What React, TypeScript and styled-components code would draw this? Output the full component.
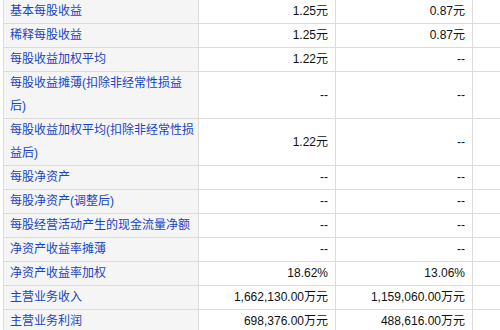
import styled, { createGlobalStyle } from "styled-components";

const GlobalStyle = createGlobalStyle`
    html, body {
        margin: 0;
        padding: 0;
        background: #ffffff;
        overflow: hidden;
    }
`;

type Row = {
    name: string;
    cur: string;
    prev: string;
    tall?: boolean;
};

const rows: Row[] = [
    { name: "基本每股收益", cur: "1.25元", prev: "0.87元" },
    { name: "稀释每股收益", cur: "1.25元", prev: "0.87元" },
    { name: "每股收益加权平均", cur: "1.22元", prev: "--" },
    { name: "每股收益摊薄(扣除非经常性损益后)", cur: "--", prev: "--", tall: true },
    { name: "每股收益加权平均(扣除非经常性损益后)", cur: "1.22元", prev: "--", tall: true },
    { name: "每股净资产", cur: "--", prev: "--" },
    { name: "每股净资产(调整后)", cur: "--", prev: "--" },
    { name: "每股经营活动产生的现金流量净额", cur: "--", prev: "--" },
    { name: "净资产收益率摊薄", cur: "--", prev: "--" },
    { name: "净资产收益率加权", cur: "18.62%", prev: "13.06%" },
    { name: "主营业务收入", cur: "1,662,130.00万元", prev: "1,159,060.00万元" },
    { name: "主营业务利润", cur: "698,376.00万元", prev: "488,616.00万元" },
];

function App(){
    return(
        <Page>
            <GlobalStyle />
            <DataTable>
                <tbody>
                    {rows.map((row) => (
                        <tr key={row.name}>
                            <NameCell $tall={row.tall}>{row.name}</NameCell>
                            <ValueCell>{row.cur}</ValueCell>
                            <ValueCell>{row.prev}</ValueCell>
                            <EmptyCell />
                        </tr>
                    ))}
                </tbody>
            </DataTable>
        </Page>
    );
}

export default App;

const Page = styled.div`
    width: 500px;
    height: 330px;
    overflow: hidden;
    padding-left: 3px;
    box-sizing: border-box;
`;

const DataTable = styled.table`
    border-collapse: separate;
    border-spacing: 0;
    table-layout: fixed;
    width: 539px;
    border-left: 1px solid #dcdcdc;
    font-family: "Liberation Sans", "Noto Sans CJK SC", sans-serif;
    font-size: 12px;
    line-height: 23px;
`;

const Cell = styled.td`
    box-sizing: border-box;
    padding: 0;
    border-right: 1px solid #dcdcdc;
    border-bottom: 1px solid #dcdcdc;
    vertical-align: middle;
`;

const NameCell = styled(Cell)<{ $tall?: boolean }>`
    width: 195px;
    height: ${(p) => (p.$tall ? "47px" : "24px")};
    padding: 0 3px 0 6px;
    background: #f5f5f5;
    color: #1a44c4;
    word-break: break-all;
`;

const ValueCell = styled(Cell)`
    width: 137px;
    padding-right: 7px;
    text-align: right;
    color: #111111;
    white-space: nowrap;
`;

const EmptyCell = styled(Cell)`
    width: 70px;
`;
